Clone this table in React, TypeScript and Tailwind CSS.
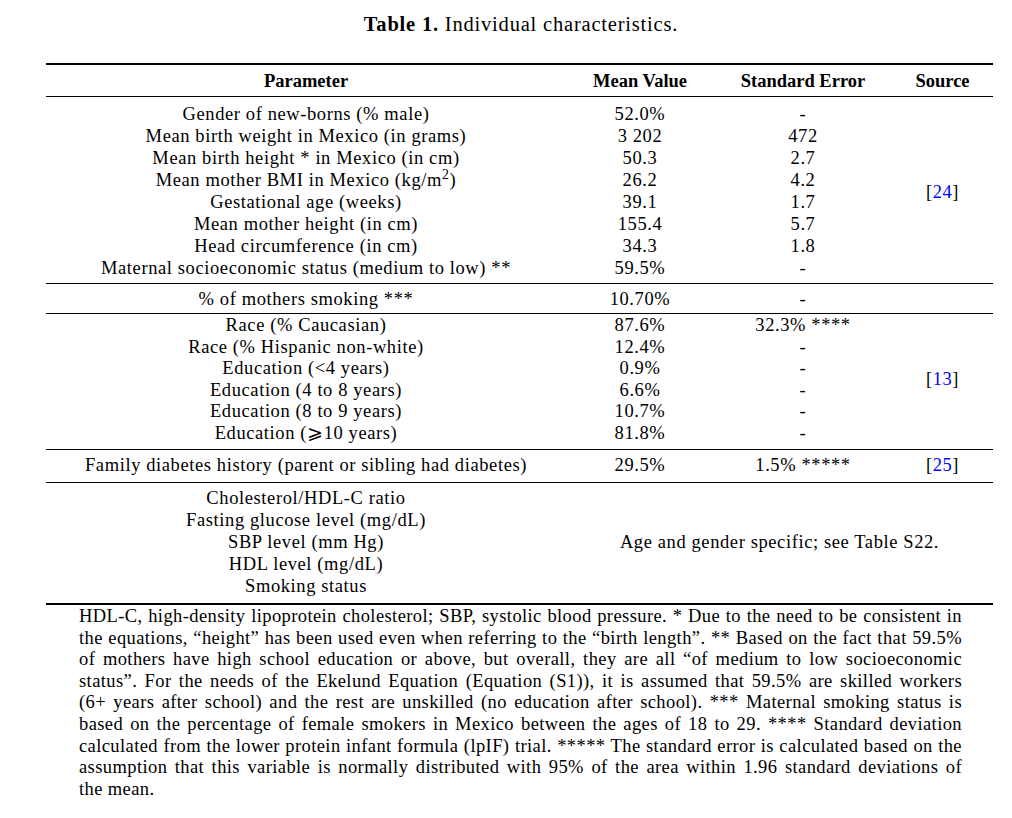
import React from 'react'

type Row = { param: React.ReactNode; mean?: string; se?: string }

const GROUP_1: Row[] = [
  { param: 'Gender of new-borns (% male)', mean: '52.0%', se: '-' },
  { param: 'Mean birth weight in Mexico (in grams)', mean: '3 202', se: '472' },
  { param: 'Mean birth height * in Mexico (in cm)', mean: '50.3', se: '2.7' },
  {
    param: (
      <>
        Mean mother BMI in Mexico (kg/m<sup>2</sup>)
      </>
    ),
    mean: '26.2',
    se: '4.2',
  },
  { param: 'Gestational age (weeks)', mean: '39.1', se: '1.7' },
  { param: 'Mean mother height (in cm)', mean: '155.4', se: '5.7' },
  { param: 'Head circumference (in cm)', mean: '34.3', se: '1.8' },
  { param: 'Maternal socioeconomic status (medium to low) **', mean: '59.5%', se: '-' },
]

const GROUP_3: Row[] = [
  { param: 'Race (% Caucasian)', mean: '87.6%', se: '32.3% ****' },
  { param: 'Race (% Hispanic non-white)', mean: '12.4%', se: '-' },
  { param: 'Education (<4 years)', mean: '0.9%', se: '-' },
  { param: 'Education (4 to 8 years)', mean: '6.6%', se: '-' },
  { param: 'Education (8 to 9 years)', mean: '10.7%', se: '-' },
  { param: 'Education (⩾10 years)', mean: '81.8%', se: '-' },
]

const LAST_PARAMS = [
  'Cholesterol/HDL-C ratio',
  'Fasting glucose level (mg/dL)',
  'SBP level (mm Hg)',
  'HDL level (mg/dL)',
  'Smoking status',
]

// footnote broken exactly where the source breaks it
const NOTE_LINES = [
  'HDL-C, high-density lipoprotein cholesterol; SBP, systolic blood pressure. * Due to the need to be consistent in',
  'the equations, \u201cheight\u201d has been used even when referring to the \u201cbirth length\u201d. ** Based on the fact that 59.5%',
  'of mothers have high school education or above, but overall, they are all \u201cof medium to low socioeconomic',
  'status\u201d.  For the needs of the Ekelund Equation (Equation (S1)), it is assumed that 59.5% are skilled workers',
  '(6+ years after school) and the rest are unskilled (no education after school).  *** Maternal smoking status is',
  'based on the percentage of female smokers in Mexico between the ages of 18 to 29.  **** Standard deviation',
  'calculated from the lower protein infant formula (lpIF) trial. ***** The standard error is calculated based on the',
  'assumption that this variable is normally distributed with 95% of the area within 1.96 standard deviations of',
]

function Ref({ n }: { n: string }) {
  return (
    <span>
      [<span className="text-[#0000ff]">{n}</span>]
    </span>
  )
}

function Rows({ rows, h = 'h-[22px]' }: { rows: Row[]; h?: string }) {
  return (
    <div className="w-[846px]">
      {rows.map((r, i) => (
        <div key={i} className={`grid grid-cols-[520px_148px_178px] items-center ${h}`}>
          <div className="text-center whitespace-nowrap">{r.param}</div>
          <div className="text-center">{r.mean}</div>
          <div className="text-center whitespace-nowrap">{r.se}</div>
        </div>
      ))}
    </div>
  )
}

export default function App() {
  return (
    <div className="w-[1012px] h-[818px] bg-white text-black font-['Liberation_Serif',serif] text-[18.5px] tracking-[0.6px] leading-[22px]">
      <div className="h-[48px] pl-[30px] flex items-center justify-center text-[20.5px] tracking-[0.8px]">
        <span>
          <b>Table 1.</b> Individual characteristics.
        </span>
      </div>

      <div className="mx-[46px] mt-[15px] w-[947px]">
        <div className="border-t-2 border-black" />
        <div className="grid grid-cols-[520px_148px_178px_101px] h-[32px] items-center font-bold tracking-normal border-b border-black">
          <div className="text-center">Parameter</div>
          <div className="text-center">Mean Value</div>
          <div className="text-center">Standard Error</div>
          <div className="text-center">Source</div>
        </div>

        <div className="flex h-[187px] pt-[6px] border-b border-black">
          <Rows rows={GROUP_1} />
          <div className="flex-1 flex items-center justify-center pb-[3px]">
            <Ref n="24" />
          </div>
        </div>

        <div className="h-[30px] pt-[4px] border-b border-black">
          <Rows rows={[{ param: '% of mothers smoking ***', mean: '10.70%', se: '-' }]} />
        </div>

        <div className="flex h-[136px] border-b border-black">
          <Rows rows={GROUP_3} h="h-[21.6px]" />
          <div className="flex-1 flex items-center justify-center pb-[6px]">
            <Ref n="13" />
          </div>
        </div>

        <div className="flex h-[33px] pt-[4px] border-b border-black">
          <Rows rows={[{ param: 'Family diabetes history (parent or sibling had diabetes)', mean: '29.5%', se: '1.5% *****' }]} />
          <div className="flex-1 flex justify-center">
            <Ref n="25" />
          </div>
        </div>

        <div className="grid grid-cols-[520px_427px] h-[120px] pt-[4px]">
          <div>
            {LAST_PARAMS.map((p) => (
              <div key={p} className="text-center h-[22px]">
                {p}
              </div>
            ))}
          </div>
          <div className="flex items-center justify-center pb-[6px]">
            Age and gender specific; see Table S22.
          </div>
        </div>
        <div className="border-t-2 border-black" />

        <div className="pl-[33px] pr-[31px] pt-[1px] leading-[21.6px] tracking-[0.4px]">
          {NOTE_LINES.map((l, i) => (
            <div key={i} className="text-justify [text-align-last:justify] whitespace-nowrap">
              {l}
            </div>
          ))}
          <div>the mean.</div>
        </div>
      </div>
    </div>
  )
}
